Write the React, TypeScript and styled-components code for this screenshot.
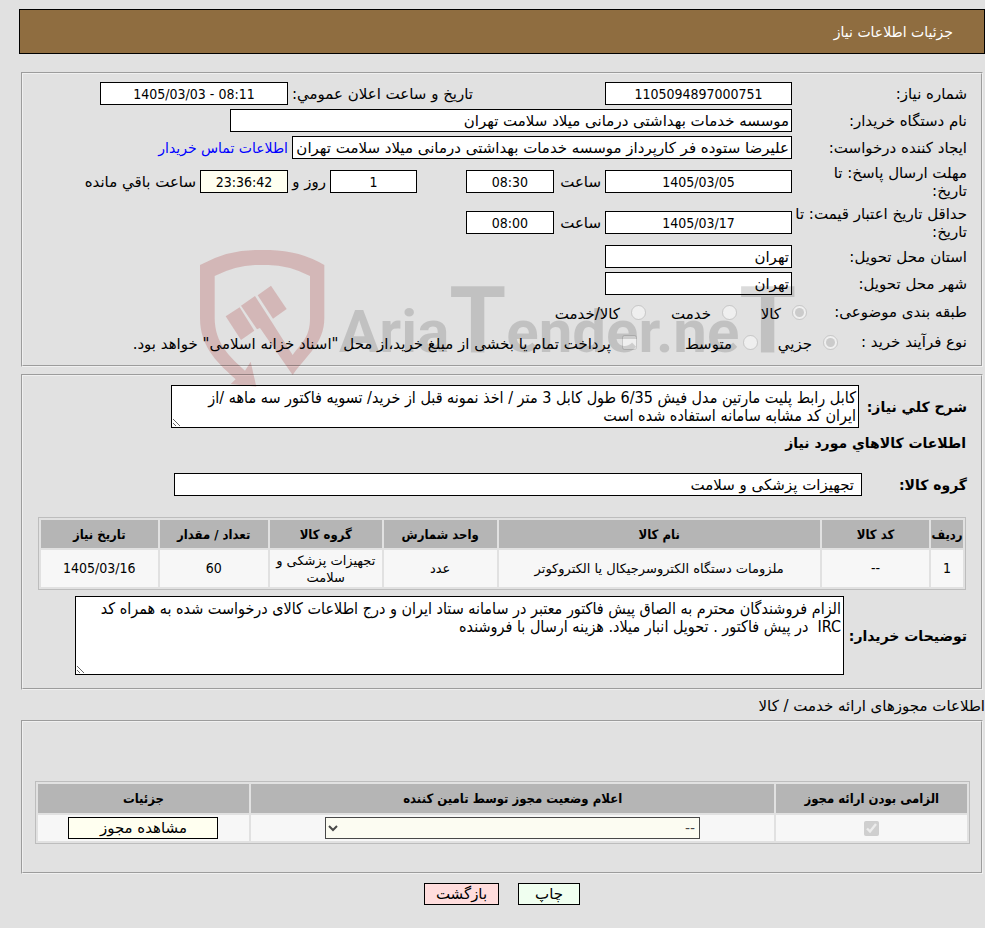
import React from "react";
import styled, { createGlobalStyle } from "styled-components";

const condensed = `"DejaVu Sans Condensed", "DejaVu Sans", sans-serif`;

const GlobalStyle = createGlobalStyle`
  *, *::before, *::after { box-sizing: border-box; }
  body {
    margin: 0;
    background: #e1e1e1;
    color: #000;
    font: 15px/18px "DejaVu Sans", sans-serif;
  }
  input, textarea, select, button { font: inherit; color: inherit; }
`;

const Page = styled.main`
  position: relative;
  direction: rtl;
  padding: 9px 0 22px 19px;
`;

const TitleBar = styled.header`
  display: flex;
  align-items: center;
  height: 45px;
  padding: 0 31px;
  border: 1px solid #000;
  background: #8f6d40;
  color: #fff;
`;

const Title = styled.h1`
  margin: 0;
  font-size: 14px;
  font-weight: normal;
`;

const Panel = styled.section<{ $top: number; $pad: string }>`
  margin: ${(p) => p.$top}px 2px 0;
  padding: ${(p) => p.$pad};
  border: 2px groove #f0f0f0;
`;

const Row = styled.div<{ $height?: number }>`
  display: flex;
  align-items: center;
  min-height: ${(p) => p.$height ?? 27}px;
`;

const WideRow = styled(Row)`
  padding: 0 14px;
`;

const Caption = styled.label<{ $width?: number }>`
  flex: none;
  width: ${(p) => p.$width ?? 175}px;
  white-space: nowrap;
`;

const BoldCaption = styled.label<{ $width: number }>`
  flex: none;
  width: ${(p) => p.$width}px;
  font-size: 14px;
  font-weight: bold;
  white-space: nowrap;
`;

const Field = styled.input<{ $width: number; $tint?: boolean }>`
  flex: 0 1 ${(p) => p.$width}px;
  width: ${(p) => p.$width}px;
  min-width: 0;
  height: 23px;
  padding: 1px 2px;
  border: 1px solid #000;
  background: ${(p) => (p.$tint ? "#fffff0" : "#fff")};
  text-align: right;
`;

const NumberField = styled(Field)`
  font-family: ${condensed};
  font-size: 14px;
  text-align: center;
`;

const GroupField = styled(Field)`
  padding-right: 7px;
`;

const Between = styled.label<{ $width: number; $end?: boolean }>`
  flex: none;
  width: ${(p) => p.$width}px;
  padding: 0 4px;
  text-align: ${(p) => (p.$end ? "left" : "right")};
  white-space: nowrap;
`;

const ContactLink = styled.a`
  margin-right: 4px;
  color: #00f;
  font-size: 14px;
  text-decoration: none;
  white-space: nowrap;
`;

const Option = styled.label<{ $width?: number }>`
  display: flex;
  align-items: center;
  gap: 11px;
  flex: none;
  width: ${(p) => (p.$width ? `${p.$width}px` : "auto")};
  white-space: nowrap;

  input { width: 15px; height: 15px; margin: 0; }
  span { padding-top: 4px; }
`;

const Area = styled.textarea<{ $width: number; $height: number }>`
  display: block;
  flex: 0 1 ${(p) => p.$width}px;
  min-width: 0;
  height: ${(p) => p.$height}px;
  padding: 3px 2px 3px 6px;
  border: 1px solid #000;
  background: #fff;
  font-family: ${condensed};
  font-size: 16px;
  overflow: auto;
`;

const Heading = styled.h2`
  margin: 6px 15px 0;
  font-size: 14px;
  font-weight: bold;
`;

const Table = styled.table<{ $margin: string; $head: number; $body: number }>`
  width: calc(100% - 30px);
  margin: ${(p) => p.$margin};
  border: 1px solid #bdbdbd;
  border-spacing: 2px;
  table-layout: fixed;
  font-size: 13px;
  line-height: 17px;
  text-align: center;

  th {
    height: ${(p) => p.$head}px;
    padding: 0;
    background: #b5b5b5;
    font-family: ${condensed};
    white-space: nowrap;
  }
  td { height: ${(p) => p.$body}px; padding: 0 2px; background: #f7f7f7; }
`;

const NumberCell = styled.td`
  font-family: ${condensed};
  font-size: 14px;
`;

const PermitTable = styled(Table)`
  width: calc(100% - 23px);
  td { line-height: 0; }
`;

const Col = styled.col<{ $share: number }>`
  width: ${(p) => p.$share}%;
`;

const Button = styled.button<{ $width: number; $bg: string }>`
  width: ${(p) => p.$width}px;
  height: 22px;
  padding: 0;
  border: 1px solid #000;
  background: ${(p) => p.$bg};
  font-size: 15px;
  line-height: 18px;
`;

const StatusSelect = styled.select`
  width: 375px;
  max-width: 96%;
  height: 22px;
  border: 1px solid #000;
  background: #fffff0;
  font-size: 14px;
`;

const Tick = styled.input`
  width: 15px;
  height: 15px;
  margin: 0;
`;

const SectionNote = styled.p`
  margin: 7px 0 0;
`;

const Actions = styled.footer`
  display: flex;
  justify-content: center;
  gap: 19px;
  margin-top: 9px;
`;

const Watermark = styled.svg`
  position: absolute;
  top: 240px;
  left: 190px;
  width: 620px;
  height: 150px;
  direction: ltr;
  pointer-events: none;
  mix-blend-mode: multiply;

  text {
    fill: #000;
    fill-opacity: 0.14;
    font: bold 60px Roboto, sans-serif;
  }
`;

const goodsHeads: [string, number][] = [
  ["ردیف", 3.5],
  ["کد کالا", 11.8],
  ["نام کالا", 35.3],
  ["واحد شمارش", 12.4],
  ["گروه کالا", 12.3],
  ["تعداد / مقدار", 11.9],
  ["تاریخ نیاز", 12.8],
];

const goods = [["1", "--", "ملزومات دستگاه الکتروسرجیکال یا الکتروکوتر", "عدد", "تجهیزات پزشکی و سلامت", "60", "1405/03/16"]];

const permitHeads: [string, number][] = [
  ["الزامی بودن ارائه مجوز", 20.6],
  ["اعلام وضعیت مجوز توسط تامین کننده", 56.6],
  ["جزئیات", 22.8],
];

const summary =
  "کابل رابط پلیت مارتین مدل فیش 6/35 طول کابل 3 متر / اخذ نمونه قبل از خرید/ تسویه فاکتور سه ماهه /از ایران کد مشابه سامانه استفاده شده است";

const buyerNotes =
  "الزام فروشندگان محترم به الصاق پیش فاکتور معتبر در سامانه ستاد ایران و درج اطلاعات کالای درخواست شده به همراه کد IRC  در پیش فاکتور . تحویل انبار میلاد. هزینه ارسال با فروشنده";

function Brand() {
  return (
    <Watermark viewBox="0 0 620 150" aria-hidden="true">
      <g fill="#b41414" fillOpacity="0.2" transform="scale(0.3333)">
        <path d="M30 75Q112 30 195 30H240Q330 32 403 75V235C403 310 350 345 308 405L210 264L201 268L153 197L195 168L243 242L308 345C338 305 360 290 360 235V108Q295 75 235 75H195Q135 77 74 108V235C75 310 118 350 165 392L182 365L199 440L122 432L137 418C90 375 30 325 30 235Z" />
        <path d="M107 229L149 202L193 272L153 300Z" />
        <path d="M203 166L243 137L290 207L249 236Z" />
      </g>
      <text x="149" y="112">
        Aria<tspan fontSize="92">T</tspan>ender.ne<tspan fontSize="92">T</tspan>
      </text>
    </Watermark>
  );
}

export default function App() {
  return (
    <>
      <GlobalStyle />
      <Page dir="rtl" lang="fa">
        <TitleBar>
          <Title>جزئیات اطلاعات نیاز</Title>
        </TitleBar>

        <Panel $top={18} $pad="6px 14px 8px">
          <Row>
            <Caption htmlFor="need-no">شماره نیاز:</Caption>
            <NumberField id="need-no" $width={187} readOnly value="1105094897000751" />
            <Between htmlFor="announce" $width={317} $end>تاریخ و ساعت اعلان عمومي:</Between>
            <NumberField id="announce" dir="ltr" $width={188} readOnly value="1405/03/03 - 08:11" />
          </Row>
          <Row>
            <Caption htmlFor="buyer">نام دستگاه خریدار:</Caption>
            <Field id="buyer" $width={562} readOnly value="موسسه خدمات بهداشتی درمانی میلاد سلامت تهران" />
          </Row>
          <Row>
            <Caption htmlFor="creator">ایجاد کننده درخواست:</Caption>
            <Field id="creator" $width={500} readOnly value="علیرضا ستوده فر کارپرداز موسسه خدمات بهداشتی درمانی میلاد سلامت تهران" />
            <ContactLink href="#contact">اطلاعات تماس خریدار</ContactLink>
          </Row>
          <Row $height={41}>
            <Caption htmlFor="reply-date">مهلت ارسال پاسخ: تا<br />تاریخ:</Caption>
            <NumberField id="reply-date" $width={187} readOnly value="1405/03/05" />
            <Between htmlFor="reply-time" $width={51}>ساعت</Between>
            <NumberField id="reply-time" $width={88} readOnly value="08:30" />
            <Between as="span" $width={49} />
            <NumberField id="days" $width={87} readOnly value="1" />
            <Between htmlFor="days" $width={42}>روز و</Between>
            <NumberField id="remaining" $width={88} $tint readOnly value="23:36:42" />
            <Between htmlFor="remaining" $width={130}>ساعت باقي مانده</Between>
          </Row>
          <Row $height={41}>
            <Caption htmlFor="price-date">حداقل تاریخ اعتبار قیمت: تا<br />تاریخ:</Caption>
            <NumberField id="price-date" $width={187} readOnly value="1405/03/17" />
            <Between htmlFor="price-time" $width={51}>ساعت</Between>
            <NumberField id="price-time" $width={88} readOnly value="08:00" />
          </Row>
          <Row>
            <Caption htmlFor="province">استان محل تحویل:</Caption>
            <Field id="province" $width={187} readOnly value="تهران" />
          </Row>
          <Row>
            <Caption htmlFor="city">شهر محل تحویل:</Caption>
            <Field id="city" $width={187} readOnly value="تهران" />
          </Row>
          <Row $height={30} role="group">
            <Caption as="span" $width={160}>طبقه بندی موضوعی:</Caption>
            <Option $width={70}><input type="radio" name="kind" defaultChecked disabled /><span>کالا</span></Option>
            <Option $width={91}><input type="radio" name="kind" disabled /><span>خدمت</span></Option>
            <Option><input type="radio" name="kind" disabled /><span>کالا/خدمت</span></Option>
          </Row>
          <Row $height={30} role="group">
            <Caption as="span" $width={129}>نوع فرآیند خرید :</Caption>
            <Option $width={80}><input type="radio" name="process" defaultChecked disabled /><span>جزیي</span></Option>
            <Option $width={121}><input type="radio" name="process" disabled /><span>متوسط</span></Option>
            <Option><input type="checkbox" disabled /><span>پرداخت تمام یا بخشی از مبلغ خرید،از محل "اسناد خزانه اسلامی" خواهد بود.</span></Option>
          </Row>
        </Panel>

        <Panel $top={7} $pad="9px 0 13px">
          <WideRow>
            <BoldCaption htmlFor="summary" $width={108}>شرح کلي نیاز:</BoldCaption>
            <Area id="summary" $width={688} $height={43} readOnly value={summary} />
          </WideRow>
          <Heading>اطلاعات کالاهاي مورد نیاز</Heading>
          <WideRow $height={65}>
            <BoldCaption htmlFor="group" $width={105}>گروه کالا:</BoldCaption>
            <GroupField id="group" $width={688} readOnly value="تجهیزات پزشکی و سلامت" />
          </WideRow>
          <Table $margin="0 15px 6px" $head={28} $body={37}>
            <colgroup>{goodsHeads.map(([h, w]) => <Col key={h} $share={w} />)}</colgroup>
            <thead>
              <tr>{goodsHeads.map(([h]) => <th key={h} scope="col">{h}</th>)}</tr>
            </thead>
            <tbody>
              {goods.map((cells) => (
                <tr key={cells[0]}>
                  {cells.map((c) => (/^[\d/-]+$/.test(c) ? <NumberCell key={c}>{c}</NumberCell> : <td key={c}>{c}</td>))}
                </tr>
              ))}
            </tbody>
          </Table>
          <WideRow>
            <BoldCaption htmlFor="notes" $width={123}>توضیحات خریدار:</BoldCaption>
            <Area id="notes" $width={769} $height={79} readOnly value={buyerNotes} />
          </WideRow>
        </Panel>

        <SectionNote>اطلاعات مجوزهای ارائه خدمت / کالا</SectionNote>
        <Panel $top={5} $pad="59px 0 28px">
          <PermitTable $margin="0 11px 0 12px" $head={29} $body={26}>
            <colgroup>{permitHeads.map(([h, w]) => <Col key={h} $share={w} />)}</colgroup>
            <thead>
              <tr>{permitHeads.map(([h]) => <th key={h} scope="col">{h}</th>)}</tr>
            </thead>
            <tbody>
              <tr>
                <td><Tick type="checkbox" aria-label="الزامی بودن ارائه مجوز" defaultChecked disabled /></td>
                <td>
                  <StatusSelect aria-label="اعلام وضعیت مجوز توسط تامین کننده" disabled>
                    <option>--</option>
                  </StatusSelect>
                </td>
                <td><Button type="button" $width={150} $bg="#fffff0">مشاهده مجوز</Button></td>
              </tr>
            </tbody>
          </PermitTable>
        </Panel>

        <Actions>
          <Button type="button" $width={62} $bg="#f0fff0">چاپ</Button>
          <Button type="button" $width={75} $bg="#ffdddd">بازگشت</Button>
        </Actions>
        <Brand />
      </Page>
    </>
  );
}
